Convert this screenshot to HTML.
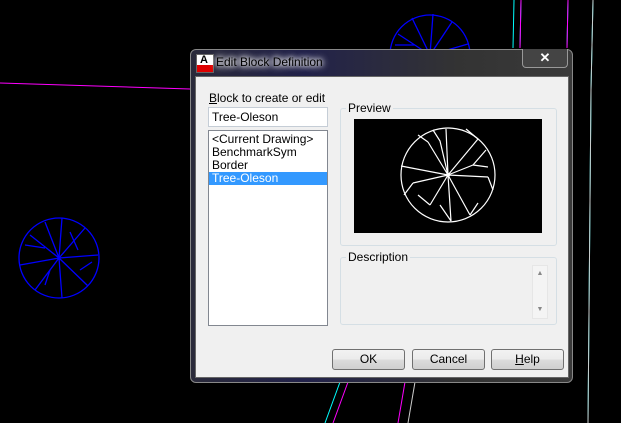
<!DOCTYPE html><html><head><style>
body{margin:0;width:621px;height:423px;background:#000;position:relative;overflow:hidden;font-family:"Liberation Sans",sans-serif;font-size:11px;color:#000}
.a{position:absolute}
.btn{position:absolute;top:349px;width:71px;height:19px;border:1px solid #707070;border-radius:3px;background:linear-gradient(#f2f2f2 0,#ebebeb 50%,#dcdcdc 51%,#cfcfcf);text-align:center;line-height:19px;font-size:12px}
.grp{position:absolute;border:1px solid #d5dfe5;border-radius:3px}
.lbl{position:absolute;background:#f0f0f0;padding:0 2px;font-size:11px;top:-8px;left:5px}
</style></head><body>
<svg class="a" style="left:0;top:0" width="621" height="423">
<line x1="0" y1="83" x2="190" y2="89" stroke="#f0f" stroke-width="1"/>
<path d="M514 0 L513 48 M521 0 L520 48 M568 0 L567 48 M593 0 L591 90 L588 423" stroke="#0ff" fill="none"/>
<path d="M521 0 L520 48 M568 0 L567 48" stroke="#f0f" fill="none"/>
<path d="M593 0 L591 90 L588 423" stroke="#ccc" fill="none"/>
<path d="M340 382 L325 423" stroke="#0ff" fill="none"/>
<path d="M348 382 L333 423 M405 382 L398 423" stroke="#f0f" fill="none"/>
<path d="M415 382 L408 423" stroke="#ccc" fill="none"/>
<g stroke="#00f" fill="none" stroke-width="1.3">
<circle cx="430" cy="55" r="40"/><path d="M430 55 L398 34 M430 55 L412 18 M430 55 L433 14 M430 55 L452 22 M430 55 L468 44 M395 45 L415 45"/>
<circle cx="59" cy="258" r="40"/><path d="M59 258 L30 235 M59 258 L45 222 M59 258 L62 218 M59 258 L85 228 M59 258 L98 255 M59 258 L88 286 M59 258 L62 298 M59 258 L35 290 M59 258 L20 265 M25 245 L45 248 M70 232 L78 250 M80 270 L92 262 M45 285 L50 270"/>
</g></svg>
<div class="a" style="left:190px;top:49px;width:381px;height:332px;border:1px solid #888;border-radius:6px;background:linear-gradient(90deg,#2a2a3a,#22224a 30%,#333 70%,#3a3a3a);"></div>
<div class="a" style="left:196px;top:54px;width:16px;height:17px;background:#fff;border:1px solid #666"><div class="a" style="left:0;top:10px;width:16px;height:7px;background:#d00"></div><div class="a" style="left:3px;top:-1px;font-size:11px;font-weight:bold">A</div></div>
<div class="a" style="left:216px;top:55px;color:#000;font-size:12px;text-shadow:0 0 8px #fff,0 0 8px #fff,0 0 4px #fff">Edit Block Definition</div>
<div class="a" style="left:522px;top:49px;width:44px;height:18px;border:1px solid #999;border-top:0;border-radius:0 0 4px 4px;background:#444;color:#fff;text-align:center;font-weight:bold;font-size:13px;line-height:18px">✕</div>
<div class="a" style="left:195px;top:76px;width:372px;height:300px;background:#f0f0f0;border:1px solid #666"></div>
<div class="a" style="left:209px;top:91px;font-size:12px"><u>B</u>lock to create or edit</div>
<div class="a" style="left:208px;top:107px;width:118px;height:18px;background:#fff;border:1px solid #c5cdd6;font-size:12px;line-height:18px;text-indent:3px">Tree-Oleson</div>
<div class="a" style="left:208px;top:130px;width:118px;height:194px;background:#fff;border:1px solid #828790;font-size:12px;line-height:13px">
<div style="padding-left:3px;margin-top:2px">&lt;Current Drawing&gt;</div><div style="padding-left:3px">BenchmarkSym</div><div style="padding-left:3px">Border</div><div style="padding-left:3px;background:#3399ff;color:#fff">Tree-Oleson</div></div>
<div class="grp" style="left:340px;top:108px;width:215px;height:136px"><div class="lbl" style="font-size:12px">Preview</div></div>
<div class="a" style="left:354px;top:119px;width:188px;height:114px;background:#000">
<svg width="188" height="114"><g stroke="#fff" fill="none" stroke-width="1.2" transform="translate(94,56)">
<circle r="47"/><path d="M0 0 L-20 -33 M0 0 L-2 -46 M0 0 L30 -36 M0 0 L-47 -9 M0 0 L-35 8 M0 0 L-18 30 M0 0 L3 46 M0 0 L22 40 M0 0 L40 2 M0 0 L25 -10 M0 0 L-8 -34 L-15 -45 M25 -10 L38 -25 M-35 8 L-44 20 M-18 30 L-30 20 M22 40 L30 28 M40 2 L45 15 M30 -36 L18 -46 M-20 -33 L-30 -40 M3 46 L-8 30 M25 -10 L40 -8"/></g><circle cx="94" cy="56" r="2" fill="#fff"/></svg></div>
<div class="grp" style="left:340px;top:257px;width:215px;height:66px"><div class="lbl" style="font-size:12px">Description</div></div>
<div class="a" style="left:532px;top:265px;width:14px;height:52px;background:#f4f4f4;border:1px solid #e6e6e6;color:#888;font-size:7px;text-align:center;line-height:10px"><div style="margin-top:3px">▲</div><div style="margin-top:26px">▼</div></div>
<div class="btn" style="left:332px">OK</div>
<div class="btn" style="left:412px">Cancel</div>
<div class="btn" style="left:491px"><u>H</u>elp</div>
</body></html>
